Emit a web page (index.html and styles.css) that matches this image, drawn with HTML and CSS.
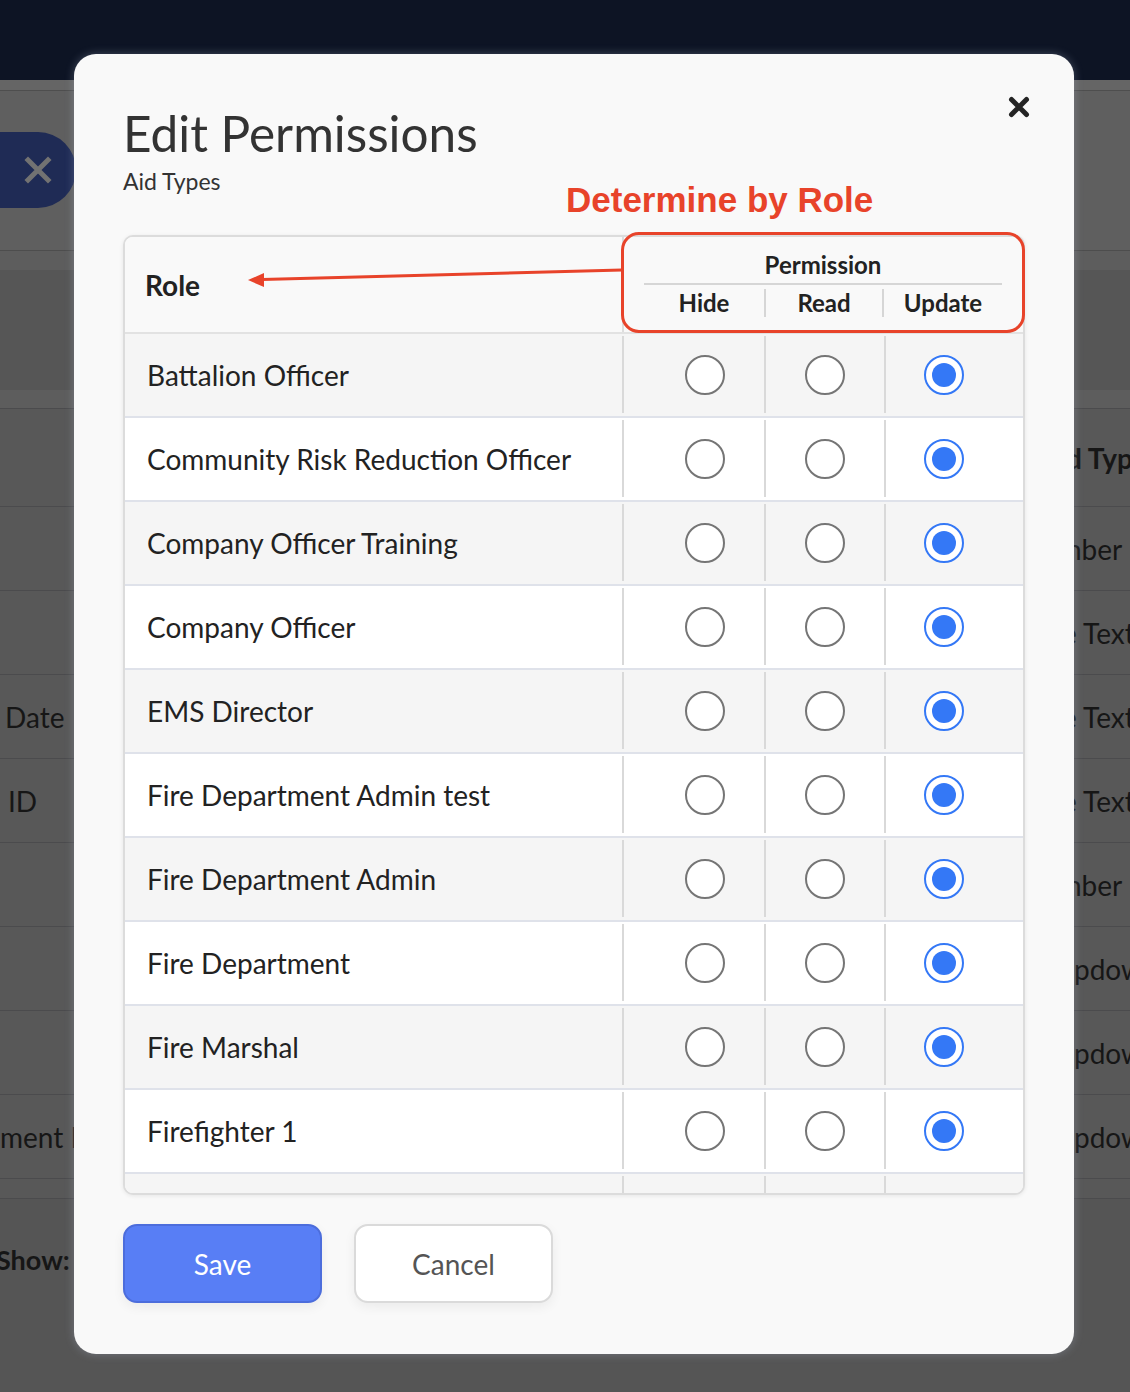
FILE: index.html
```html
<!DOCTYPE html>
<html lang="en">
<head>
    <meta charset="UTF-8">
    <meta name="viewport" content="width=device-width, initial-scale=1.0">
    <title>Edit Permissions</title>
    <link rel="stylesheet" href="styles.css">
</head>
<body>
    <!-- Page behind the modal (dimmed) -->
    <div class="page">
        <div class="topbar"></div>
        <div class="subbar"></div>
        <div class="toolbar">
            <div class="pill">
                <svg width="28" height="28" viewBox="0 0 28 28">
                    <path d="M4 4 L24 24 M24 4 L4 24" stroke="#727272" stroke-width="5" stroke-linecap="square" fill="none"/>
                </svg>
            </div>
        </div>
        <div class="filters"><div class="filters-box"></div></div>
        <div class="bg-table">
            <div class="bg-row bg-head"><span class="bg-left"></span><span class="bg-right bold">d Typ</span></div>
            <div class="bg-row"><span class="bg-left"></span><span class="bg-right">nber</span></div>
            <div class="bg-row"><span class="bg-left"></span><span class="bg-right wide">e Text</span></div>
            <div class="bg-row"><span class="bg-left pad-date">Date</span><span class="bg-right wide">e Text</span></div>
            <div class="bg-row"><span class="bg-left pad-id">ID</span><span class="bg-right wide">e Text</span></div>
            <div class="bg-row"><span class="bg-left"></span><span class="bg-right">nber</span></div>
            <div class="bg-row"><span class="bg-left"></span><span class="bg-right shift">pdown</span></div>
            <div class="bg-row"><span class="bg-left"></span><span class="bg-right shift">pdown</span></div>
            <div class="bg-row"><span class="bg-left">ment Name</span><span class="bg-right shift">pdown</span></div>
            <div class="bg-row bg-short"></div>
        </div>
        <div class="bg-foot"><span class="show">Show:</span></div>
    </div>

    <!-- Modal -->
    <div class="modal">
        <button class="close" type="button">
            <svg width="24" height="24" viewBox="0 0 24 24">
                <path d="M4.5 4.5 L19.5 19.5 M19.5 4.5 L4.5 19.5" stroke="#242424" stroke-width="5" stroke-linecap="round" fill="none"/>
            </svg>
        </button>

        <h1>Edit Permissions</h1>
        <div class="subtitle">Aid Types</div>

        <div class="perm-table">
            <div class="thead">
                <div class="th-role">Role</div>
                <div class="th-perm">
                    <div class="perm-title">Permission</div>
                    <div class="perm-cols">
                        <span>Hide</span>
                        <span>Read</span>
                        <span>Update</span>
                    </div>
                </div>
            </div>
            <div class="tbody">
                <div class="row">
                    <div class="cell-role">Battalion Officer</div>
                    <div class="cell-opt first"><input type="radio" name="r1"></div>
                    <div class="cell-opt"><input type="radio" name="r1"></div>
                    <div class="cell-opt last"><input type="radio" name="r1" checked></div>
                </div>
                <div class="row">
                    <div class="cell-role">Community Risk Reduction Officer</div>
                    <div class="cell-opt first"><input type="radio" name="r2"></div>
                    <div class="cell-opt"><input type="radio" name="r2"></div>
                    <div class="cell-opt last"><input type="radio" name="r2" checked></div>
                </div>
                <div class="row">
                    <div class="cell-role">Company Officer Training</div>
                    <div class="cell-opt first"><input type="radio" name="r3"></div>
                    <div class="cell-opt"><input type="radio" name="r3"></div>
                    <div class="cell-opt last"><input type="radio" name="r3" checked></div>
                </div>
                <div class="row">
                    <div class="cell-role">Company Officer</div>
                    <div class="cell-opt first"><input type="radio" name="r4"></div>
                    <div class="cell-opt"><input type="radio" name="r4"></div>
                    <div class="cell-opt last"><input type="radio" name="r4" checked></div>
                </div>
                <div class="row">
                    <div class="cell-role">EMS Director</div>
                    <div class="cell-opt first"><input type="radio" name="r5"></div>
                    <div class="cell-opt"><input type="radio" name="r5"></div>
                    <div class="cell-opt last"><input type="radio" name="r5" checked></div>
                </div>
                <div class="row">
                    <div class="cell-role">Fire Department Admin test</div>
                    <div class="cell-opt first"><input type="radio" name="r6"></div>
                    <div class="cell-opt"><input type="radio" name="r6"></div>
                    <div class="cell-opt last"><input type="radio" name="r6" checked></div>
                </div>
                <div class="row">
                    <div class="cell-role">Fire Department Admin</div>
                    <div class="cell-opt first"><input type="radio" name="r7"></div>
                    <div class="cell-opt"><input type="radio" name="r7"></div>
                    <div class="cell-opt last"><input type="radio" name="r7" checked></div>
                </div>
                <div class="row">
                    <div class="cell-role">Fire Department</div>
                    <div class="cell-opt first"><input type="radio" name="r8"></div>
                    <div class="cell-opt"><input type="radio" name="r8"></div>
                    <div class="cell-opt last"><input type="radio" name="r8" checked></div>
                </div>
                <div class="row">
                    <div class="cell-role">Fire Marshal</div>
                    <div class="cell-opt first"><input type="radio" name="r9"></div>
                    <div class="cell-opt"><input type="radio" name="r9"></div>
                    <div class="cell-opt last"><input type="radio" name="r9" checked></div>
                </div>
                <div class="row">
                    <div class="cell-role">Firefighter 1</div>
                    <div class="cell-opt first"><input type="radio" name="r10"></div>
                    <div class="cell-opt"><input type="radio" name="r10"></div>
                    <div class="cell-opt last"><input type="radio" name="r10" checked></div>
                </div>
                <div class="row">
                    <div class="cell-role">Firefighter 2</div>
                    <div class="cell-opt first"><input type="radio" name="r11"></div>
                    <div class="cell-opt"><input type="radio" name="r11"></div>
                    <div class="cell-opt last"><input type="radio" name="r11" checked></div>
                </div>
            </div>
        </div>

        <div class="actions">
            <button class="btn btn-save" type="button">Save</button>
            <button class="btn btn-cancel" type="button">Cancel</button>
        </div>

        <!-- Annotation -->
        <div class="note-title">Determine by Role</div>
        <div class="note-box"></div>
        <svg class="note-arrow" width="380" height="30" viewBox="0 0 380 30">
            <line x1="378" y1="11" x2="18" y2="20.5" stroke="#e8432a" stroke-width="3"/>
            <polygon points="4,21 20,14 20,28" fill="#e8432a"/>
        </svg>
    </div>
</body>
</html>
```

FILE: styles.css
```css
/* Reset */
* {
    box-sizing: border-box;
}

body {
    margin: 0;
    width: 1130px;
    height: 1392px;
    overflow: hidden;
    position: relative;
    font-family: 'Lato', 'Noto Sans', sans-serif;
    background-color: #575757;
    color: #222;
}

/* Background page (already dimmed by overlay) */
.topbar {
    height: 80px;
    background-color: #0d1424;
}

.subbar {
    height: 11px;
    background-color: #656565;
    border-bottom: 1px solid #4e4e4e;
}

.toolbar {
    height: 160px;
    padding-top: 41px;
    background-color: #5f5f5f;
    border-bottom: 1px solid #4d4d4d;
}

.pill {
    width: 76px;
    height: 76px;
    border-radius: 0 38px 38px 0;
    background-color: #1f2b55;
    display: flex;
    align-items: center;
    justify-content: center;
}

.filters {
    height: 158px;
    padding-top: 19px;
    background-color: #5d5d5d;
    border-bottom: 1px solid #4b4b4d;
}

.filters-box {
    height: 120px;
    background-color: #565656;
}

.bg-row {
    height: 84px;
    display: flex;
    align-items: center;
    background-color: #585858;
    border-bottom: 1px solid #4b4b4d;
    font-size: 28px;
    color: #161616;
    white-space: nowrap;
}

.bg-head {
    height: 98px;
}

.bg-short {
    height: 20px;
}

.bg-left {
    width: 80px;
    overflow: hidden;
}

.pad-date {
    padding-left: 5px;
}

.pad-id {
    padding-left: 8px;
}

.bg-right {
    margin-left: auto;
    width: 64px;
    overflow: hidden;
}

.bg-right.wide {
    width: 68px;
}

.bg-right.shift {
    width: 56px;
}

.bold {
    font-weight: 700;
}

.bg-foot {
    height: 200px;
    padding-top: 44px;
    background-color: #555;
    font-size: 27px;
    font-weight: 700;
    color: #161616;
}

.show {
    margin-left: -4px;
}

/* Modal */
.modal {
    position: absolute;
    left: 74px;
    top: 54px;
    width: 1000px;
    height: 1300px;
    padding: 50px 49px 0;
    background-color: #f9f9f9;
    border-radius: 22px;
    box-shadow: 0 0 10px rgba(190, 200, 225, 0.3);
}

.close {
    position: absolute;
    left: 933px;
    top: 41px;
    width: 24px;
    height: 24px;
    padding: 0;
    border: none;
    background: none;
    cursor: pointer;
}

h1 {
    margin: 0;
    font-size: 49.5px;
    font-weight: 400;
    line-height: 58px;
    color: #333;
}

.subtitle {
    margin-top: 6px;
    font-size: 23px;
    line-height: 26px;
    color: #333;
}

/* Permission table */
.perm-table {
    margin-top: 41px;
    border: 2px solid #dcdcdc;
    border-radius: 10px;
    overflow: hidden;
    background-color: #fff;
    box-shadow: 0 1px 4px rgba(0, 0, 0, 0.08);
}

.thead {
    display: grid;
    grid-template-columns: 497px 401px;
    height: 97px;
    border-bottom: 2px solid #e2e2e2;
    background-color: #f9f9f9;
}

.th-role {
    align-self: center;
    padding-left: 20px;
    font-size: 28px;
    font-weight: 700;
}

.th-perm {
    border-left: 2px solid #ddd;
    padding: 14px 21px 0 20px;
}

.perm-title {
    text-align: center;
    font-size: 24px;
    font-weight: 700;
    line-height: 28px;
    padding-bottom: 4px;
    border-bottom: 2px solid #d6d6d6;
}

.perm-cols {
    display: grid;
    grid-template-columns: 120px 118px 120px;
    margin-top: 4px;
}

.perm-cols span {
    text-align: center;
    font-size: 24px;
    font-weight: 700;
    line-height: 28px;
}

.perm-cols span + span {
    border-left: 2px solid #d6d6d6;
}

.tbody {
    height: 859px;
    overflow: hidden;
}

.row {
    display: grid;
    grid-template-columns: 497px 142px 120px 139px;
    height: 84px;
    border-bottom: 2px solid #dfe2ea;
    background-color: #fff;
}

.row:nth-child(odd) {
    background-color: #f5f5f5;
}

.cell-role {
    display: flex;
    align-items: center;
    padding-left: 22px;
    font-size: 28px;
    color: #222;
}

.cell-opt {
    display: flex;
    align-items: center;
    justify-content: center;
    margin: 2px 0 3px;
    border-left: 2px solid #d9d9d9;
}

.cell-opt.first {
    padding-left: 22px;
}

.cell-opt.last {
    padding-right: 22px;
}

input[type="radio"] {
    appearance: none;
    -webkit-appearance: none;
    margin: 0;
    width: 40px;
    height: 40px;
    border: 2px solid #757575;
    border-radius: 50%;
    background-color: #fff;
    display: grid;
    place-content: center;
}

input[type="radio"]:checked {
    border-color: #3478f6;
}

input[type="radio"]:checked::before {
    content: "";
    display: block;
    width: 24px;
    height: 24px;
    border-radius: 50%;
    background-color: #3478f6;
}

/* Buttons */
.actions {
    display: flex;
    gap: 32px;
    margin-top: 29px;
}

.btn {
    width: 199px;
    height: 79px;
    border-radius: 14px;
    font-family: 'Lato', sans-serif;
    font-size: 28px;
    cursor: pointer;
    box-shadow: 0 4px 12px rgba(0, 0, 0, 0.06);
}

.btn-save {
    background-color: #587ef5;
    border: 2px solid #4c6ddc;
    color: #fff;
}

.btn-cancel {
    background-color: #fff;
    border: 2px solid #dadada;
    color: #555;
}

/* Annotation layer */
.note-title {
    position: absolute;
    left: 492px;
    top: 126px;
    font-family: 'Liberation Sans', Arial, sans-serif;
    font-size: 35px;
    font-weight: 700;
    line-height: 40px;
    color: #e8432a;
}

.note-box {
    position: absolute;
    left: 547px;
    top: 178px;
    width: 404px;
    height: 101px;
    border: 3px solid #e8432a;
    border-radius: 18px;
}

.note-arrow {
    position: absolute;
    left: 170px;
    top: 205px;
}
```
